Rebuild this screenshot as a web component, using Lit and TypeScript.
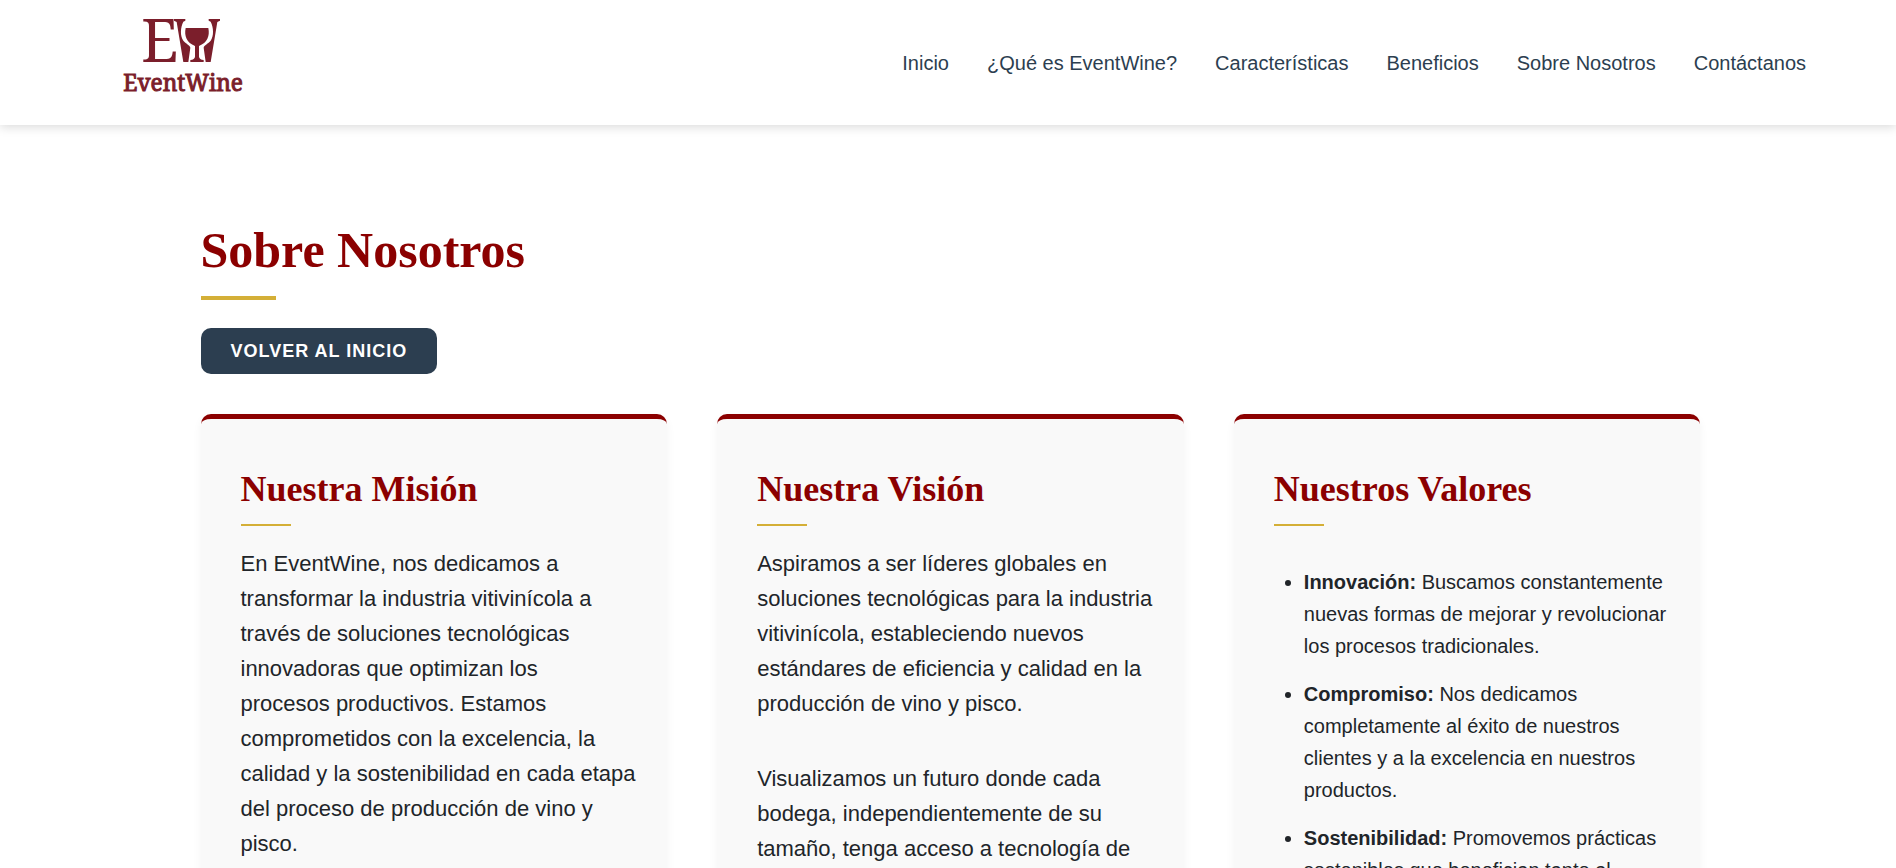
import { LitElement, html, css, svg } from "lit";
import { customElement } from "lit/decorators.js";

const NAV = ["Inicio", "¿Qué es EventWine?", "Características", "Beneficios", "Sobre Nosotros", "Contáctanos"];

const VALUES = [
  { name: "Innovación:", text: "Buscamos constantemente nuevas formas de mejorar y revolucionar los procesos tradicionales." },
  { name: "Compromiso:", text: "Nos dedicamos completamente al éxito de nuestros clientes y a la excelencia en nuestros productos." },
  { name: "Sostenibilidad:", text: "Promovemos prácticas sostenibles que benefician tanto al" },
];

@customElement("wine-logo")
export class WineLogo extends LitElement {
  static styles = css`
    :host { display: block; }
    .mark { display: block; width: 120px; height: 125px; fill: #7b1e2b; overflow: visible; }
    .initial { font: 180px "Noto Serif", "Liberation Serif", serif; }
    .name { font: 68px "Noto Serif", "Liberation Serif", serif; stroke: #7b1e2b; stroke-width: 3; }
  `;
  render() {
    const side = svg`
      <path d="M222 57H256V62L250 65C241 82 240 108 250 122C257 131 270 135 271 143L265 186H250L230 66L222 62Z"/>`;
    return html`
      <svg class="mark" viewBox="72 0 360 375" role="img" aria-label="EventWine">
        <text class="initial" x="123" y="186">E</text>
        ${side}
        <g transform="translate(582 0) scale(-1 1)">${side}</g>
        <path d="M257 84H325C330 108 322 128 297 138V170Q298 178 311 180V186H271V180Q284 178 285 170V138C260 128 252 108 257 84Z"/>
        <text class="name" x="70" y="272">EventWine</text>
      </svg>`;
  }
}

@customElement("info-card")
export class InfoCard extends LitElement {
  static properties = { heading: { type: String } };
  declare heading: string;
  static styles = css`
    :host {
      display: block;
      box-sizing: border-box;
      padding: 40px 24px 40px 40px;
      background: #f9f9f9;
      border-top: 5px solid #8b0000;
      border-radius: 10px;
      box-shadow: 0 4px 10px rgba(0, 0, 0, 0.05);
    }
    .heading {
      margin: 0 0 20px;
      font: bold 36px/60px "Liberation Serif", serif;
      color: #8b0000;
    }
    .heading::after {
      content: "";
      display: block;
      width: 50px;
      height: 2px;
      margin-top: 5px;
      background: #d4af37;
    }
  `;
  render() {
    return html`<h2 class="heading">${this.heading}</h2><slot></slot>`;
  }
}

@customElement("app-root")
export class AppRoot extends LitElement {
  static styles = css`
    :host {
      display: block;
      height: 100vh;
      overflow: hidden;
      background: #fff;
      color: #212529;
      font-family: "Liberation Sans", Arial, sans-serif;
    }
    .header {
      display: flex;
      align-items: center;
      justify-content: space-between;
      padding: 0 90px 0 124px;
      box-shadow: 0 2px 10px rgba(0, 0, 0, 0.15);
    }
    .nav { display: flex; gap: 38px; }
    .link { font-size: 20px; line-height: 30px; color: #2c3e50; text-decoration: none; }
    .main { padding: 90px 0 0 5px; }
    .inner { max-width: 1500px; margin: 0 auto; }
    .title {
      margin: 0 0 28px;
      font: bold 50px/70px "Liberation Serif", serif;
      color: #8b0000;
    }
    .title::after {
      content: "";
      display: block;
      width: 75px;
      height: 4px;
      margin-top: 11px;
      background: #d4af37;
    }
    .back {
      display: inline-block;
      padding: 0 30px;
      background: #2c3e50;
      border-radius: 10px;
      color: #fff;
      font-size: 18px;
      font-weight: bold;
      line-height: 46px;
      letter-spacing: 1px;
      text-transform: uppercase;
      text-decoration: none;
    }
    .cards {
      display: grid;
      grid-template-columns: repeat(3, 1fr);
      gap: 50px;
      margin-top: 40px;
    }
    .text { margin: 0 0 40px; font-size: 22px; line-height: 35px; }
    .list { margin: 40px 0 0; padding-left: 30px; font-size: 20px; line-height: 32px; }
    .item { margin-bottom: 16px; }
  `;
  render() {
    return html`
      <header class="header">
        <wine-logo></wine-logo>
        <nav class="nav">${NAV.map((n) => html`<a class="link" href="#">${n}</a>`)}</nav>
      </header>
      <main class="main">
        <div class="inner">
          <h1 class="title">Sobre Nosotros</h1>
          <a class="back" href="#">Volver al inicio</a>
          <section class="cards">
            <info-card heading="Nuestra Misión">
              <p class="text">En EventWine, nos dedicamos a transformar la industria vitivinícola a través de soluciones tecnológicas innovadoras que optimizan los procesos&nbsp;productivos. Estamos comprometidos con la excelencia, la calidad y la sostenibilidad en cada etapa del proceso de producción de vino y pisco.</p>
            </info-card>
            <info-card heading="Nuestra Visión">
              <p class="text">Aspiramos a ser líderes globales en soluciones tecnológicas para la industria vitivinícola, estableciendo nuevos estándares de eficiencia y calidad en la producción de vino y pisco.</p>
              <p class="text">Visualizamos un futuro donde cada bodega, independientemente de su tamaño, tenga acceso a tecnología de</p>
            </info-card>
            <info-card heading="Nuestros Valores">
              <ul class="list">${VALUES.map((v) => html`<li class="item"><strong>${v.name}</strong> ${v.text}</li>`)}</ul>
            </info-card>
          </section>
        </div>
      </main>`;
  }
}
